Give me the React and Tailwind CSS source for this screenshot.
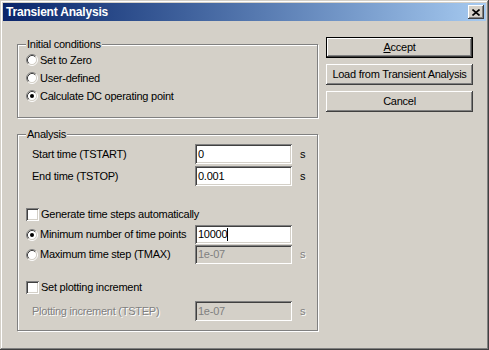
import React from 'react';

const raised =
  'shadow-[inset_-1px_-1px_#404040,inset_1px_1px_#ffffff,inset_-2px_-2px_#808080,inset_2px_2px_#d4d0c8]';
const sunken =
  'shadow-[inset_1px_1px_#808080,inset_-1px_-1px_#ffffff,inset_2px_2px_#404040,inset_-2px_-2px_#d4d0c8]';

const Radio = ({ checked }) => (
  <svg width="12" height="12" viewBox="0 0 12 12" className="shrink-0">
    <circle cx="6" cy="6" r="4.5" fill="#ffffff" />
    <path d="M2.11 9.89 A5.5 5.5 0 0 1 9.89 2.11" fill="none" stroke="#808080" strokeWidth="1" />
    <path d="M9.89 2.11 A5.5 5.5 0 0 1 2.11 9.89" fill="none" stroke="#ffffff" strokeWidth="1" />
    <path d="M2.82 9.18 A4.5 4.5 0 0 1 9.18 2.82" fill="none" stroke="#404040" strokeWidth="1" />
    <path d="M9.18 2.82 A4.5 4.5 0 0 1 2.82 9.18" fill="none" stroke="#d4d0c8" strokeWidth="1" />
    {checked && <circle cx="6" cy="6" r="2" fill="#000000" />}
  </svg>
);

const Check = () => <div className={`w-[13px] h-[13px] shrink-0 bg-white ${sunken}`} />;

const Field = ({ value, disabled, caret, h = 'h-[20px]' }) => (
  <div
    className={`w-[97px] ${h} flex items-center pl-[3px] ${sunken} ${
      disabled ? 'bg-[#d4d0c8] text-[#808080]' : 'bg-white text-black'
    }`}
  >
    <span>{value}</span>
    {caret && <span className="w-px h-[13px] bg-black" />}
  </div>
);

const Unit = ({ disabled }) => (
  <span
    className={`ml-[8px] text-[11px] ${
      disabled ? 'text-[#808080] [text-shadow:1px_1px_0_#ffffff]' : 'text-black'
    }`}
  >
    s
  </span>
);

const Group = ({ label, className, children }) => (
  <div
    className={`relative border border-[#808080] shadow-[1px_1px_0_#ffffff,inset_1px_1px_0_#ffffff] ${className}`}
  >
    <span className="absolute -top-[8px] left-[8px] bg-[#d4d0c8] px-px leading-[14px]">{label}</span>
    {children}
  </div>
);

const Button = ({ children, isDefault }) => (
  <div
    className={`h-[21px] flex items-center justify-center bg-[#d4d0c8] ${
      isDefault
        ? 'border border-black shadow-[inset_-1px_-1px_#404040,inset_1px_1px_#ffffff,inset_-2px_-2px_#808080]'
        : raised
    }`}
  >
    {children}
  </div>
);

export default function App() {
  return (
    <div
      className={`w-[489px] h-[350px] bg-[#d4d0c8] p-[3px] text-[11px] tracking-[-0.25px] text-black font-['Liberation_Sans',Arial,sans-serif] shadow-[inset_-1px_-1px_#404040,inset_1px_1px_#d4d0c8,inset_-2px_-2px_#808080,inset_2px_2px_#ffffff] overflow-hidden`}
    >
      {/* title bar */}
      <div className="h-[18px] flex items-center bg-linear-to-r from-[#0a246a] to-[#a6caf0] pl-[3px] pr-[2px]">
        <span className="text-white font-bold text-[12px] tracking-[-0.2px]">Transient Analysis</span>
        <div className={`ml-auto w-[16px] h-[14px] bg-[#d4d0c8] flex items-center justify-center ${raised}`}>
          <svg width="8" height="7" viewBox="0 0 8 7">
            <path d="M0.5 0.5 L7.5 6.5 M7.5 0.5 L0.5 6.5" stroke="#000" strokeWidth="1.6" />
          </svg>
        </div>
      </div>

      {/* body */}
      <div className="flex pl-[14px]">
        <div className="w-[301px] pt-[23px]">
          <Group label="Initial conditions" className="h-[74px] pt-[6px] pl-[8px]">
            <div className="h-[18px] flex items-center gap-[2px]">
              <Radio />
              <span>Set to Zero</span>
            </div>
            <div className="h-[18px] flex items-center gap-[2px]">
              <Radio />
              <span>User-defined</span>
            </div>
            <div className="h-[18px] flex items-center gap-[2px]">
              <Radio checked />
              <span>Calculate DC operating point</span>
            </div>
          </Group>

          <Group label="Analysis" className="h-[197px] mt-[16px] pt-[9px]">
            <div className="h-[20px] flex items-center">
              <span className="ml-[14px] w-[163px]">Start time (TSTART)</span>
              <Field value="0" />
              <Unit />
            </div>
            <div className="h-[20px] mt-[2px] flex items-center">
              <span className="ml-[14px] w-[163px]">End time (TSTOP)</span>
              <Field value="0.001" />
              <Unit />
            </div>

            <div className="h-[16px] mt-[20px] flex items-center gap-[2px] pl-[8px]">
              <Check />
              <span>Generate time steps automatically</span>
            </div>

            <div className="h-[19px] mt-[3px] flex items-center pl-[8px]">
              <div className="w-[169px] flex items-center gap-[2px]">
                <Radio checked />
                <span>Minimum number of time points</span>
              </div>
              <Field value="10000" caret h="h-[19px]" />
            </div>
            <div className="h-[19px] mt-[1px] flex items-center pl-[8px]">
              <div className="w-[169px] flex items-center gap-[2px]">
                <Radio />
                <span>Maximum time step (TMAX)</span>
              </div>
              <Field value="1e-07" disabled h="h-[19px]" />
              <Unit disabled />
            </div>

            <div className="h-[16px] mt-[15px] flex items-center gap-[2px] pl-[8px]">
              <Check />
              <span>Set plotting increment</span>
            </div>
            <div className="h-[20px] mt-[6px] flex items-center">
              <span className="ml-[14px] w-[163px] text-[#808080] [text-shadow:1px_1px_0_#ffffff]">
                Plotting increment (TSTEP)
              </span>
              <Field value="1e-07" disabled />
              <Unit disabled />
            </div>
          </Group>
        </div>

        <div className="w-[147px] ml-[8px] pt-[16px] flex flex-col gap-[6px]">
          <Button isDefault>
            <span>
              <span className="underline">A</span>ccept
            </span>
          </Button>
          <Button>Load from Transient Analysis</Button>
          <Button>Cancel</Button>
        </div>
      </div>
    </div>
  );
}
